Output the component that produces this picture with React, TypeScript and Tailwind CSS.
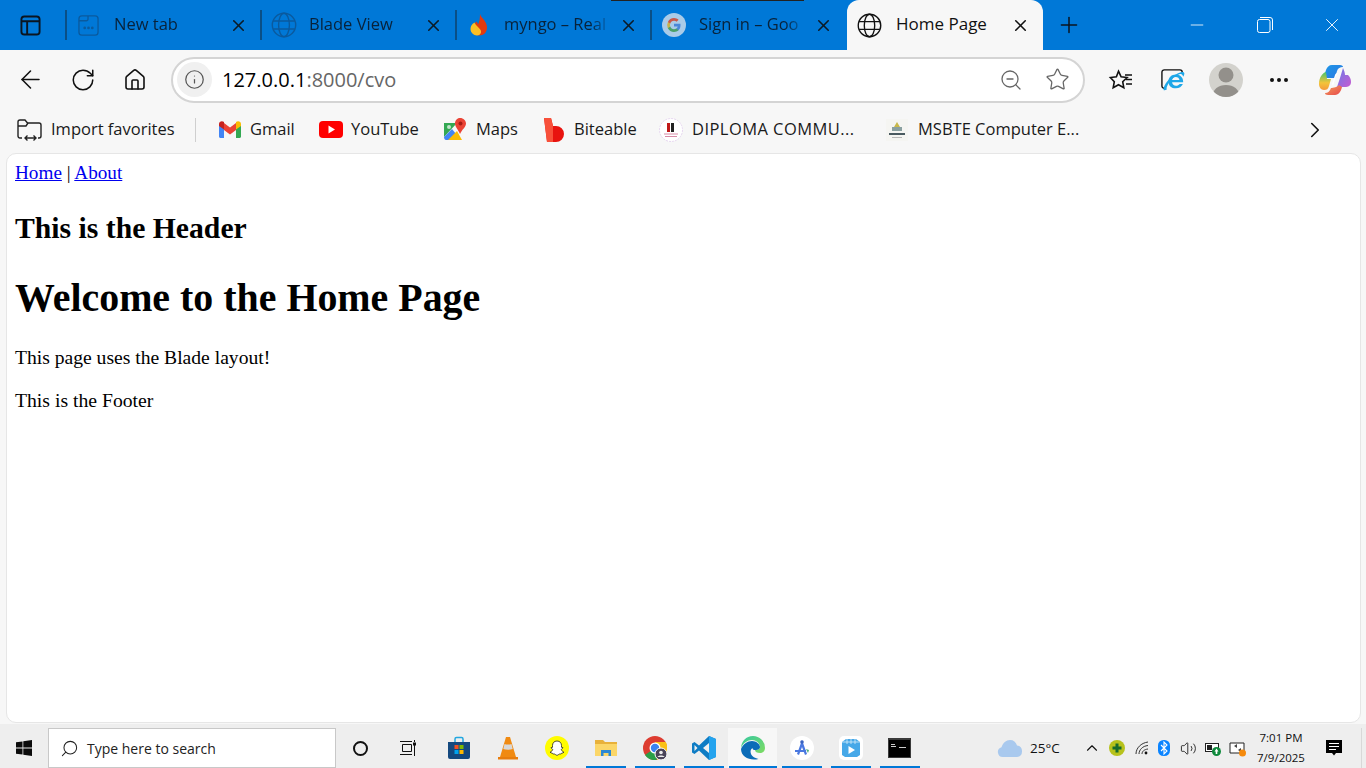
import type { ReactNode } from 'react';
import { X, Plus, Minus, ArrowLeft, RotateCw, Home, Info, ZoomOut, Star, MoreHorizontal, ChevronRight, ChevronUp, Search, Volume2 } from 'lucide-react';

function Globe({ size = 26, className = '' }: { size?: number; className?: string }) {
  return (
    <svg width={size} height={size} viewBox="0 0 24 24" fill="none" stroke="currentColor" strokeWidth="1.3" className={className}>
      <circle cx="12" cy="12" r="10.8" />
      <ellipse cx="12" cy="12" rx="5" ry="10.8" />
      <path d="M2 8.3h20M2 15.7h20" />
    </svg>
  );
}

function NewTabIcon() {
  return (
    <svg width="21" height="21" viewBox="0 0 22 22" fill="none" stroke="#0a5a9e" strokeWidth="1.4">
      <rect x="1" y="1" width="20" height="20" rx="3" />
      <path d="M1 6h8c1 0 1.5-.5 1.5-1.5V1" />
      <circle cx="7" cy="13.5" r=".7" fill="#0a5a9e" />
      <circle cx="11" cy="13.5" r=".7" fill="#0a5a9e" />
      <circle cx="15" cy="13.5" r=".7" fill="#0a5a9e" />
    </svg>
  );
}

function Flame() {
  return (
    <svg width="18" height="22" viewBox="0 0 18 22">
      <path d="M10 0c1 4 7 7 7 13.5C17 18.500 13.500 21.500 9.500 21.500 5 21.500 2 18.500 2 14.500c0-3 3-4 4-7 1 .5 2 2 2 3 1.500-3 2-6 2-10.500z" fill="#e23a0e" />
      <path d="M4.500 8.500C2 10 .5 12 .5 15c0 3.500 3 6.500 6.500 6.500 2 0 3.500-1 4-3 .5-3-2-4-3.500-6C6 11 5 10 4.500 8.500z" fill="#fbbf24" />
    </svg>
  );
}

function GoogleG() {
  return (
    <svg width="24" height="24" viewBox="0 0 24 24">
      <circle cx="12" cy="12" r="12" fill="#a9cbe8" />
      <path d="M18.500 12.200c0-.5 0-1-.1-1.400H12v2.700h3.700c-.2.900-.7 1.600-1.400 2.100v1.700h2.200c1.300-1.200 2-3 2-5.100z" fill="#4a86d8" />
      <path d="M12 19c1.800 0 3.400-.6 4.500-1.700l-2.200-1.700c-.6.400-1.400.7-2.300.7-1.800 0-3.300-1.200-3.800-2.800H5.900v1.700C7 17.500 9.300 19 12 19z" fill="#4aa06a" />
      <path d="M8.200 13.500c-.3-.9-.3-2 0-2.900V8.900H5.900a7 7 0 0 0 0 6.300l2.300-1.700z" fill="#c8b24a" />
      <path d="M12 7.800c1 0 1.900.3 2.600 1l2-2C15.400 5.700 13.800 5 12 5 9.300 5 7 6.500 5.900 8.900l2.300 1.700c.5-1.600 2-2.800 3.800-2.800z" fill="#c8584a" />
    </svg>
  );
}

function Tab({ icon, title }: { icon: ReactNode; title: string }) {
  return (
    <div className="flex h-[50px] w-[195px] shrink-0 items-center">
      <div className="h-[30px] w-[2px] shrink-0 bg-[#0a4f86]" />
      <div className="flex w-[47px] shrink-0 justify-center pr-[4px]">{icon}</div>
      <div className="-mt-[2px] w-[108px] overflow-hidden whitespace-nowrap text-[16.500px] text-[#08223a]" style={{ maskImage: 'linear-gradient(to right, black 80%, transparent 100%)' }}>
        {title}
      </div>
      <div className="flex flex-1 justify-end pr-[12px]">
        <X size={19} strokeWidth={2} className="text-[#0c1a26]" />
      </div>
    </div>
  );
}

function TabBar() {
  return (
    <div className="relative flex h-[50px] shrink-0 items-center bg-[#0078d7]">
      <div className="absolute left-[611px] top-0 h-px w-[193px] bg-[#222]" />
      <div className="flex w-[65px] shrink-0 justify-center pr-[5px]">
        <svg width="21" height="21" viewBox="0 0 22 22" fill="none" stroke="#0b1520" strokeWidth="2">
          <rect x="1.500" y="1.500" width="19" height="19" rx="3" />
          <path d="M1.500 6.500h19M7.500 6.500v14" />
        </svg>
      </div>
      <Tab icon={<NewTabIcon />} title="New tab" />
      <Tab icon={<Globe size={26} className="text-[#0a5a9e]" />} title="Blade View" />
      <Tab icon={<Flame />} title="myngo – Real" />
      <Tab icon={<GoogleG />} title="Sign in – Goo" />
      <div className="ml-[2px] flex h-[50px] w-[196px] shrink-0 items-center rounded-t-[12px] bg-[#f7f7f7] text-[#111]">
        <div className="flex w-[49px] shrink-0 justify-center pr-[5px]">
          <Globe size={25} />
        </div>
        <div className="-mt-[2px] whitespace-nowrap text-[17px]">Home Page</div>
        <div className="flex flex-1 justify-end pr-[13px]">
          <X size={19} strokeWidth={2} />
        </div>
      </div>
      <div className="flex w-[52px] shrink-0 justify-center">
        <Plus size={26} strokeWidth={1.4} className="text-[#0b1520]" />
      </div>
      <div className="ml-auto flex items-center text-white">
        <div className="flex w-[68px] justify-center pl-[2px]"><Minus size={20} strokeWidth={1} /></div>
        <div className="flex w-[68px] justify-center pl-[2px]">
          <svg width="16" height="16" viewBox="0 0 16 16" fill="none" stroke="currentColor" strokeWidth="1">
            <rect x=".5" y="2.500" width="12.500" height="13" rx="2" />
            <path d="M3 .5h10a2.500 2.500 0 0 1 2.500 2.500v10" />
          </svg>
        </div>
        <div className="flex w-[68px] justify-center"><X size={22} strokeWidth={1} /></div>
      </div>
    </div>
  );
}

function FavIcon() {
  return (
    <svg width="26" height="24" viewBox="0 0 26 24" fill="none" stroke="#111" strokeWidth="1.6">
      <path d="M11.500 3.200l2.600 5.600 6 .7-4.400 4.200 1.100 6-5.300-3-5.300 3 1.100-6L3.400 9.500l6-.7z" />
      <path d="M18 7h7M19 11.500h6M19 16h6" />
    </svg>
  );
}

function IeIcon() {
  return (
    <svg width="24" height="24" viewBox="0 0 26 26">
      <path d="M5 22H3.500A2.500 2.500 0 0 1 1 19.500V4.500A2.500 2.500 0 0 1 3.500 2h17A2.500 2.500 0 0 1 23 4.500V6" fill="none" stroke="#111" strokeWidth="1.5" />
      <path d="M16 7c4.500 0 8 3 8 7.500v1H12c.3 2.500 2 3.800 4.200 3.800 1.700 0 3-.7 4-2h3.500c-1.400 3-4 4.700-7.500 4.700C11 22 8 18.900 8 14.500S11.500 7 16 7zm4 6c-.3-2-1.800-3.300-4-3.300s-3.700 1.300-4 3.300z" fill="#1ea7e8" />
      <path d="M3 24c-1-2 1.500-8 7-12.500S21 4 24.500 4.500c1.500.5.8 3-.5 5-.5-2-1.500-3-2.500-3-2.500 0-7 2.500-10.500 6.500S5 22 6.500 23c-1.500 1.200-3 1.500-3.500 1z" fill="#1ea7e8" />
    </svg>
  );
}

function Copilot() {
  return (
    <svg width="34" height="32" viewBox="0 0 34 32">
      <defs>
        <linearGradient id="cpA" x1="0" y1="0" x2="1" y2="1">
          <stop offset="0" stopColor="#1c9be8" />
          <stop offset="1" stopColor="#2f6fe0" />
        </linearGradient>
        <linearGradient id="cpB" x1="0" y1="0" x2="0" y2="1">
          <stop offset="0" stopColor="#46c36b" />
          <stop offset=".6" stopColor="#f3c43a" />
          <stop offset="1" stopColor="#f59a3c" />
        </linearGradient>
        <linearGradient id="cpC" x1="0" y1="0" x2="1" y2="1">
          <stop offset="0" stopColor="#6a7ae8" />
          <stop offset="1" stopColor="#c65ad0" />
        </linearGradient>
        <linearGradient id="cpD" x1="0" y1="0" x2="1" y2="1">
          <stop offset="0" stopColor="#f2a05a" />
          <stop offset="1" stopColor="#e8484c" />
        </linearGradient>
      </defs>
      <path d="M3 21L8 6c1-3 3-5 6-5h8c2 0 3 1 3 2-3 0-5 1-6 4l-2 7H6z" fill="url(#cpA)" />
      <path d="M8 8C4 9 1 14 1 20c0 3 2 6 5 6 3 0 4-1 5-4l2-7H9z" fill="url(#cpB)" />
      <path d="M25 4c1 2 2 5 2 7h3c2 2 3 4 3 7 0 4-3 5-6 5h-8l3-9c1-3 2-7 3-10z" fill="url(#cpC)" />
      <path d="M13 24c2 0 7-1 8-3l3 2c-1 4-3 8-7 8h-7c-2 0-3-1-3-2 3 0 5-2 6-5z" fill="url(#cpD)" />
      <path d="M14 20l3-9c.5-1.500 1.500-2 3-2-1 1-1.500 2-2 3.500L15 22z" fill="#fff" />
    </svg>
  );
}

function Toolbar() {
  return (
    <div className="flex h-[56px] shrink-0 items-center bg-[#f7f7f7] pt-[3px] text-[#111]">
      <div className="flex w-[57px] justify-center pl-[3px]"><ArrowLeft size={29} strokeWidth={1.3} /></div>
      <div className="flex w-[52px] justify-center"><RotateCw size={26} strokeWidth={1.4} /></div>
      <div className="flex w-[52px] justify-center"><Home size={24} strokeWidth={1.6} /></div>
      <div className="ml-[10px] flex h-[46px] w-[914px] shrink-0 items-center rounded-full border-2 border-[#d4d4d4] bg-white pl-[4px]">
        <div className="flex h-[35px] w-[35px] items-center justify-center rounded-full bg-[#f0f0f0]">
          <Info size={21} strokeWidth={1.4} className="text-[#555]" />
        </div>
        <div className="ml-[10px] whitespace-nowrap text-[20px]">
          <span className="text-black">127.0.0.1</span>
          <span className="text-[#666]">:8000/cvo</span>
        </div>
        <div className="ml-auto flex w-[47px] justify-center text-[#666]"><ZoomOut size={24} strokeWidth={1.3} /></div>
        <div className="mr-[2px] flex w-[47px] justify-center text-[#666]"><Star size={25} strokeWidth={1.2} /></div>
      </div>
      <div className="ml-[17px] flex w-[36px] justify-center"><FavIcon /></div>
      <div className="ml-[17px] flex w-[36px] justify-center"><IeIcon /></div>
      <div className="ml-[18px] flex h-[34px] w-[34px] items-end justify-center overflow-hidden rounded-full bg-[#d3d2cd]">
        <svg width="34" height="34" viewBox="0 0 34 34" fill="#93908b">
          <circle cx="17" cy="12" r="7.500" />
          <path d="M3.500 34c0-8 6-12 13.500-12s13.500 4 13.500 12z" />
        </svg>
      </div>
      <div className="ml-[19px] flex w-[34px] justify-center"><MoreHorizontal size={24} strokeWidth={2} /></div>
      <div className="ml-[21px] flex w-[36px] justify-center"><Copilot /></div>
    </div>
  );
}

function Bookmark({ icon, label, width, iconWidth, gap, wide = false }: { icon: ReactNode; label: string; width: number; iconWidth: number; gap: number; wide?: boolean }) {
  return (
    <div className="flex shrink-0 items-center" style={{ width }}>
      <div className="flex shrink-0 justify-center" style={{ width: iconWidth, marginRight: gap }}>{icon}</div>
      <span className={wide ? 'whitespace-nowrap text-[16.500px] tracking-[0.45px] text-[#1a1a1a]' : 'whitespace-nowrap text-[16.500px] text-[#1a1a1a]'}>{label}</span>
    </div>
  );
}

const gmail = (
  <svg width="22" height="17" viewBox="0 0 22 17">
    <path d="M0 3v12.500C0 16.300.7 17 1.500 17H5V8z" fill="#4285f4" />
    <path d="M22 3v12.500c0 .8-.7 1.500-1.500 1.500H17V8z" fill="#34a853" />
    <path d="M5 9l6 4.500L17 9V2l-6 4.500L5 2z" fill="#ea4335" />
    <path d="M0 3c0-2.500 3-3.500 5-2v7.500L0 5z" fill="#c5221f" />
    <path d="M22 3c0-2.500-3-3.500-5-2v7.500L22 5z" fill="#fbbc04" />
  </svg>
);

const youtube = (
  <svg width="24" height="17" viewBox="0 0 24 17">
    <rect width="24" height="17" rx="4" fill="#f00" />
    <path d="M9.500 4.500l6.500 4-6.500 4z" fill="#fff" />
  </svg>
);

const maps = (
  <svg width="22" height="24" viewBox="0 0 22 24">
    <path d="M0 5h13L0 19z" fill="#34a853" />
    <path d="M0 19L8 11l9 11H2c-1 0-2-1-2-3z" fill="#4285f4" />
    <path d="M4 22l9-9 5 9z" fill="#fbbc04" />
    <path d="M16 0c3.500 0 6 2.500 6 5.500 0 3.500-4 6-6 10.500-1.500-4-5-7-5-10.500C11 2.500 13 0 16 0z" fill="#ea4335" />
    <circle cx="16.500" cy="5.500" r="2" fill="#a51c14" />
    <circle cx="5" cy="9" r="2" fill="#fff" opacity=".7" />
  </svg>
);

const biteable = (
  <svg width="20" height="24" viewBox="0 0 20 24">
    <path d="M0 0h7l2 8h3a8 8 0 0 1 0 16H3z" fill="#e8130f" />
    <path d="M0 0h7l2 8v16H3z" fill="#f8503a" />
  </svg>
);

const diploma = (
  <svg width="24" height="24" viewBox="0 0 24 24">
    <circle cx="12" cy="12" r="11.500" fill="#fff" stroke="#e6d6f0" strokeDasharray="2 1" />
    <rect x="8" y="5" width="3" height="9" fill="#c01818" />
    <rect x="12" y="5" width="3" height="9" fill="#222" />
    <path d="M5 16h14M6 18.500h12" stroke="#d88aa8" />
  </svg>
);

const msbte = (
  <svg width="22" height="22" viewBox="0 0 22 22">
    <rect width="22" height="22" fill="#f5f5f2" />
    <path d="M11 3l3 5H8z" fill="#c8b84a" />
    <path d="M6 8h10v4H6z" fill="#8aa0a0" />
    <path d="M3 14h16v2H3z" fill="#4a5a60" />
    <path d="M6 18h10v1H6z" fill="#b8b8b8" />
  </svg>
);

function BookmarkBar() {
  return (
    <div className="flex h-[47px] shrink-0 items-center bg-[#f7f7f7] pl-[17px]">
      <div className="flex w-[178px] shrink-0 items-center">
        <svg width="26" height="24" viewBox="0 0 26 24" fill="none" stroke="#222" strokeWidth="1.4">
          <path d="M5 20H3a2 2 0 0 1-2-2V4a2 2 0 0 1 2-2h5l2.500 3H22a2 2 0 0 1 2 2v11a2 2 0 0 1-2 2h-1" />
          <path d="M1 8h8l2-3" />
          <path d="M8 20h11M10.500 17.500L8 20l2.500 2.500M16.500 17.500L19 20l-2.500 2.500" />
        </svg>
        <span className="ml-[8px] whitespace-nowrap text-[16.500px] text-[#1a1a1a]">Import favorites</span>
      </div>
      <div className="h-[24px] w-px shrink-0 bg-[#cfcfcf]" />
      <div className="ml-[23px] flex items-center">
        <Bookmark icon={gmail} label="Gmail" width={100} iconWidth={22} gap={9} />
        <Bookmark icon={youtube} label="YouTube" width={125} iconWidth={24} gap={8} />
        <Bookmark icon={maps} label="Maps" width={100} iconWidth={22} gap={10} />
        <Bookmark icon={biteable} label="Biteable" width={115} iconWidth={20} gap={10} />
        <Bookmark icon={diploma} label="DIPLOMA COMMU..." width={227} iconWidth={24} gap={9} wide />
        <Bookmark icon={msbte} label="MSBTE Computer E..." width={229} iconWidth={22} gap={10} />
      </div>
      <div className="ml-auto flex w-[102px] justify-center"><ChevronRight size={26} strokeWidth={1.5} className="text-[#111]" /></div>
    </div>
  );
}

function PagePanel() {
  return (
    <div className="ml-[6px] mr-[5px] flex-1 rounded-[10px] border border-[#e6e6e6] bg-white pl-[8px] pt-[8px] text-black" style={{ fontFamily: '"Liberation Serif", serif' }}>
      <div className="text-[19.200px] leading-[22px]">
        <a href="#" className="text-[#0000ee] underline">Home</a> | <a href="#" className="text-[#0000ee] underline">About</a>
      </div>
      <h2 className="mt-[28px] text-[29.700px] font-bold leading-[33px]">This is the Header</h2>
      <h1 className="mt-[31px] text-[39.900px] font-bold leading-[44px]">Welcome to the Home Page</h1>
      <p className="mt-[27px] text-[19.600px] leading-[22px]">This page uses the Blade layout!</p>
      <p className="mt-[20px] text-[19.700px] leading-[22px]">This is the Footer</p>
    </div>
  );
}

function TaskApp({ children, active = false, line = true }: { children: ReactNode; active?: boolean; line?: boolean }) {
  return (
    <div className={active ? 'relative flex h-[40px] w-[49px] shrink-0 items-center justify-center bg-[#f7f7f7]' : 'relative flex h-[40px] w-[49px] shrink-0 items-center justify-center'}>
      {children}
      {line && <div className={active ? 'absolute bottom-0 left-[1px] right-0 h-[2px] bg-[#0078d7]' : 'absolute bottom-0 left-[5px] right-[4px] h-[2px] bg-[#0078d7]'} />}
    </div>
  );
}

function TaskbarApps() {
  return (
    <div className="ml-[3px] flex">
      <TaskApp line={false}>
        <svg width="24" height="24" viewBox="0 0 24 24">
          <path d="M8 6V3a1.500 1.500 0 0 1 1.500-1.500h5A1.500 1.500 0 0 1 16 3v3" fill="none" stroke="#22a7e0" strokeWidth="1.500" />
          <path d="M1 6h22v15a2 2 0 0 1-2 2H3a2 2 0 0 1-2-2z" fill="#14497f" />
          <rect x="7.500" y="9" width="4" height="4" fill="#f25022" />
          <rect x="12.500" y="9" width="4" height="4" fill="#7fba00" />
          <rect x="7.500" y="14" width="4" height="4" fill="#00a4ef" />
          <rect x="12.500" y="14" width="4" height="4" fill="#ffb900" />
        </svg>
      </TaskApp>
      <TaskApp line={false}>
        <svg width="22" height="24" viewBox="0 0 22 24">
          <path d="M1 21h20v2.500H1z" fill="#e87d0d" />
          <path d="M9 1h4l6 20H3z" fill="#f08a12" />
          <path d="M7.500 8c2 .8 5 .8 7 0l1.200 5c-2.500 1-6.800 1-9.400 0z" fill="#d8d8d8" />
        </svg>
      </TaskApp>
      <TaskApp line={false}>
        <svg width="24" height="24" viewBox="0 0 24 24">
          <circle cx="12" cy="12" r="12" fill="#fffc00" />
          <path d="M12 5c3 0 4.500 2.200 4.500 4.500v1.800l1.500.4c-.3 1-1.700 1.300-1.700 1.700.3 1.300 1.500 2.400 2.700 2.800-.4.700-1.700.8-2.400 1-.3.600-.4.900-1.200.8-1.500-.3-2.200 1.300-3.400 1.300s-1.900-1.600-3.400-1.300c-.8.100-.9-.2-1.200-.8-.7-.2-2-.3-2.400-1 1.200-.4 2.400-1.500 2.700-2.800 0-.4-1.400-.7-1.700-1.700l1.500-.4V9.500C7.500 7.200 9 5 12 5z" fill="#fff" stroke="#222" strokeWidth=".8" />
        </svg>
      </TaskApp>
      <TaskApp>
        <svg width="22" height="20" viewBox="0 0 22 20">
          <path d="M0 2h8l2 2h12v4H0z" fill="#e8b13a" />
          <path d="M0 6h22v12H0z" fill="#fbd668" />
          <path d="M6 12h10v6h-2.500v-3h-5v3H6z" fill="#2b87d3" />
        </svg>
      </TaskApp>
      <TaskApp>
        <svg width="24" height="24" viewBox="0 0 24 24">
          <circle cx="12" cy="12" r="12" fill="#dd3c30" />
          <path d="M12 12L2 19a12 12 0 0 0 12 4.800z" fill="#2a9f48" />
          <path d="M12 6h10.800A12 12 0 0 1 14 23.800z" fill="#fbc116" />
          <circle cx="12" cy="12" r="5.500" fill="#fff" />
          <circle cx="12" cy="12" r="4.200" fill="#3b82f0" />
          <circle cx="18" cy="18" r="6" fill="#4a4458" stroke="#fff" />
          <circle cx="18" cy="16.500" r="1.800" fill="#eee" />
          <path d="M14.500 21c.5-2 6.500-2 7 0" fill="#eee" />
        </svg>
      </TaskApp>
      <TaskApp>
        <svg width="24" height="24" viewBox="0 0 24 24">
          <path d="M17 0l7 3v18l-7 3-10-9.500L2.500 18 0 16.500v-9L2.500 6 7 9.500z" fill="#0e7cc4" />
          <path d="M17 0l7 3v18l-7 3z" fill="#24a3ee" />
          <path d="M17 7v10l-6-5z" fill="#f0f0f0" />
          <path d="M2.500 9v6l3-3z" fill="#f0f0f0" />
        </svg>
      </TaskApp>
      <TaskApp active>
        <svg width="24" height="24" viewBox="0 0 24 24">
          <defs>
            <linearGradient id="edA" x1="0" y1="0" x2="1" y2="1">
              <stop offset="0" stopColor="#36c8a0" />
              <stop offset="1" stopColor="#7fdc62" />
            </linearGradient>
          </defs>
          <path d="M12 0a12 12 0 0 1 12 12c0 3-2 5-5 5s-5-1-5-3c4 0 5-1.500 5-3 0-4-4-7-8-7-4.500 0-9 3-11 8C.5 5 5 0 12 0z" fill="url(#edA)" />
          <path d="M11 5c4 0 8 3 8 6 0 1.500-1 3-5 3-1.500 0-2.500-.5-2.500-2-2.500 1.500-3 6 1 9 1 .7 3 1.500 5 2C9 25 0 21 0 13 2 8 6.500 5 11 5z" fill="#0b6cb8" />
        </svg>
      </TaskApp>
      <TaskApp>
        <svg width="24" height="24" viewBox="0 0 24 24">
          <circle cx="12" cy="12" r="12" fill="#fff" />
          <path d="M12 4l5 14-2 1-3-8-3 8-2-1z" fill="#4a78e0" />
          <path d="M5 14h11v2H5z" fill="#4a78e0" />
          <circle cx="12" cy="6" r="1.800" fill="#3a62c0" />
          <path d="M16 13l3 1-1 3z" fill="#4caf7a" />
        </svg>
      </TaskApp>
      <TaskApp>
        <svg width="24" height="24" viewBox="0 0 24 24">
          <rect width="24" height="24" rx="5" fill="#fff" />
          <path d="M3 6l4-3h10l4 3v13l-3 2H6l-3-2z" fill="#46a8e8" />
          <path d="M3 6h18M8 3v5M12 3v5M16 3v5" stroke="#d4ecfa" strokeWidth=".8" />
          <path d="M9.500 10l6.500 4-6.500 4z" fill="#fff" />
        </svg>
      </TaskApp>
      <TaskApp>
        <svg width="23" height="20" viewBox="0 0 23 20">
          <rect width="23" height="20" fill="#3a3a3a" />
          <rect x="1" y="2" width="21" height="17" fill="#000" />
          <path d="M3 6h4v1H3zM3 8h5v1H3zM11 9h7v1h-7z" fill="#ccc" />
        </svg>
      </TaskApp>
    </div>
  );
}

function Tray() {
  return (
    <div className="ml-auto flex h-[40px] items-center text-[#111]">
      <svg width="26" height="17" viewBox="0 0 26 17">
        <path d="M6 17a5 5 0 0 1-1.500-9.800C6 3 9 0 13 0c3.500 0 6 2 7 5.500a5.800 5.800 0 0 1 0 11.500z" fill="#a9c9ee" />
      </svg>
      <span className="ml-[7px] w-[47px] text-[13.500px]">25°C</span>
      <div className="flex w-[30px] justify-center"><ChevronUp size={18} strokeWidth={1.5} /></div>
      <svg className="ml-[2px]" width="16" height="16" viewBox="0 0 16 16">
        <circle cx="8" cy="8" r="8" fill="#b7c21c" />
        <path d="M6.500 3.500h3v3h3v3h-3v3h-3v-3h-3v-3h3z" fill="#176b2c" />
      </svg>
      <svg className="ml-[10px]" width="14" height="14" viewBox="0 0 14 14" fill="none" stroke="#333">
        <path d="M1 13C1 7 6 2 13 1M4 13C4 9 7.500 5 13 4.500M7 13c0-2.500 2-4.500 6-5" />
        <circle cx="11" cy="12" r="1.400" fill="#111" stroke="none" />
      </svg>
      <svg className="ml-[9px]" width="12" height="16" viewBox="0 0 12 16">
        <rect width="12" height="16" rx="5.500" fill="#0a84ff" />
        <path d="M3 5l6 6-3 3V2l3 3-6 6" fill="none" stroke="#fff" strokeWidth="1.100" />
      </svg>
      <div className="ml-[10px] flex"><Volume2 size={17} strokeWidth={1.200} /></div>
      <svg className="ml-[8px]" width="17" height="15" viewBox="0 0 17 15">
        <rect x=".5" y="2.500" width="13" height="8" fill="#fff" stroke="#222" />
        <rect x="2" y="4" width="5" height="5" fill="#222" />
        <circle cx="11.500" cy="10.500" r="4.500" fill="#0f8a3c" />
        <path d="M11.500 7.500l2 3h-1.200v2.500h-1.600v-2.500H9.500z" fill="#fff" />
      </svg>
      <svg className="ml-[7px]" width="17" height="17" viewBox="0 0 17 17">
        <path d="M1 3h14v10H1z" fill="#fff" stroke="#222" />
        <path d="M5 6l3-2v4zM9 10l3 2V8z" fill="#444" />
        <circle cx="13.500" cy="13" r="3.500" fill="#f58a0c" />
      </svg>
      <div className="ml-[4px] flex w-[62px] flex-col items-center text-[11.500px] leading-[20px]">
        <span>7:01 PM</span>
        <span>7/9/2025</span>
      </div>
      <svg className="ml-[14px]" width="16" height="16" viewBox="0 0 16 16">
        <path d="M0 0h16v13H10l-2 2.500L6 13H0z" fill="#000" />
        <path d="M3 3.500h10M3 6.500h10M3 9.500h7" stroke="#fff" />
      </svg>
      <div className="ml-[19px] mr-[4px] h-[40px] w-px bg-[#d8d8d8]" />
    </div>
  );
}

function Taskbar() {
  return (
    <div className="flex h-[44px] shrink-0 items-end bg-[#eeeeee]">
      <div className="flex h-[40px] w-[48px] shrink-0 items-center justify-center">
        <svg width="16" height="16" viewBox="0 0 16 16" fill="#0b0b0b">
          <path d="M0 2.300l6.500-.9v6.200H0zM7.300 1.300L16 0v7.600H7.300zM0 8.400h6.500v6.200L0 13.700zM7.300 8.400H16V16l-8.700-1.300z" />
        </svg>
      </div>
      <div className="flex h-[40px] w-[288px] shrink-0 items-center border border-[#c8c8c8] bg-white pl-[11px] text-[#222]">
        <Search size={19} strokeWidth={1.300} className="-scale-x-100" />
        <span className="ml-[8px] text-[14px]">Type here to search</span>
      </div>
      <div className="flex h-[40px] w-[48px] shrink-0 items-center justify-center">
        <div className="h-[15px] w-[15px] rounded-full border-[2.500px] border-[#111]" />
      </div>
      <div className="flex h-[40px] w-[47px] shrink-0 items-center justify-center">
        <svg width="16" height="16" viewBox="0 0 16 16" fill="none" stroke="#111">
          <path d="M0 1.500h12M2.500 4.500h9v7h-9zM0 14.500h12M14.500 0v2M14.500 5v11" />
          <rect x="13.500" y="3" width="2" height="2" fill="#111" />
        </svg>
      </div>
      <TaskbarApps />
      <Tray />
    </div>
  );
}

export default function App() {
  return (
    <div className="flex h-[768px] w-[1366px] flex-col overflow-hidden bg-[#f7f7f7]" style={{ fontFamily: '"Open Sans", sans-serif' }}>
      <TabBar />
      <Toolbar />
      <BookmarkBar />
      <PagePanel />
      <div className="h-px shrink-0" />
      <Taskbar />
    </div>
  );
}
